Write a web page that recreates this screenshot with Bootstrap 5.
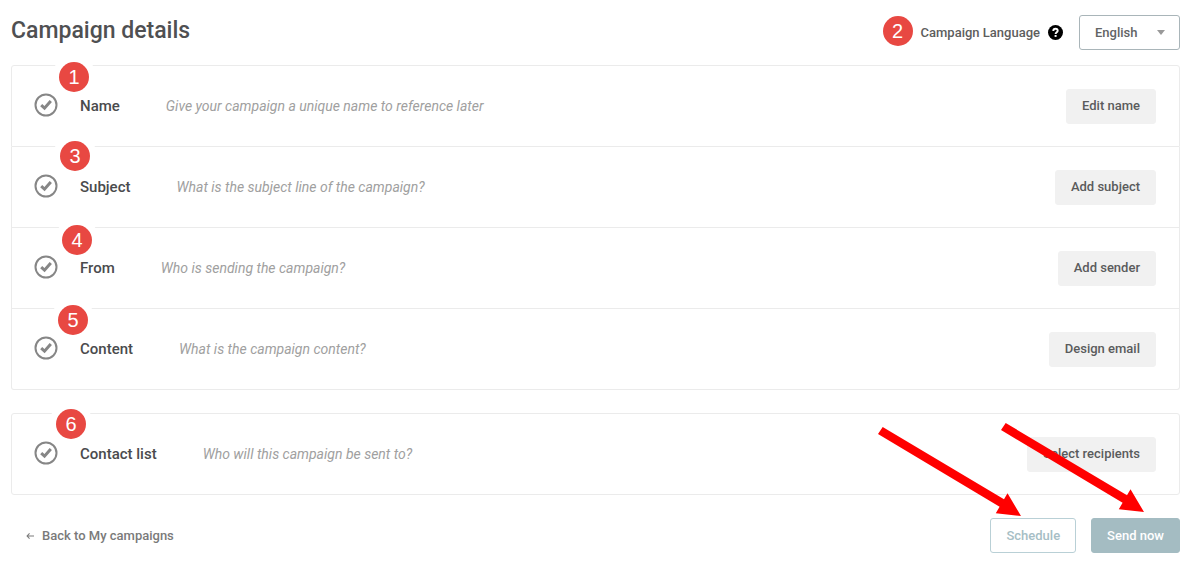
<!DOCTYPE html>
<html lang="en">
<head>
<meta charset="utf-8">
<meta name="viewport" content="width=device-width, initial-scale=1">
<title>Campaign details</title>
<link href="https://cdn.jsdelivr.net/npm/bootstrap@5.3.0/dist/css/bootstrap.min.css" rel="stylesheet">
<style>
  body { font-family: Roboto, "Liberation Sans", sans-serif; font-size: 14px; line-height: 20px; color: #4f5052; background: #fff; }
  .page { padding: 15px 11px 12px; }
  .page-title { font-size: 23px; line-height: 30px; font-weight: 500; color: #4f5052; }
  .lang-label { font-size: 13px; font-weight: 500; color: #5d5d5d; }
  .lang-select { width: 101px; height: 35px; padding: 0 36px 0 15px; font-size: 13px; font-weight: 500; color: #626465; border: 1px solid #a9b5b9; border-radius: 3px;
    background-image: url("data:image/svg+xml,%3Csvg xmlns='http://www.w3.org/2000/svg' viewBox='0 0 8 5'%3E%3Cpath fill='%23999' d='M0 0h8L4 5z'/%3E%3C/svg%3E");
    background-size: 8px 5px; background-position: right 14px center; }
  .panel { --bs-list-group-border-color: #ebebeb; --bs-list-group-border-radius: 3px; margin-bottom: 23px; }
  .page-head { margin-bottom: 15px; }
  .step { height: 81px; padding: 0 23px 0 22px; }
  .step:first-child { height: 82px; }
  .step-tick { margin-bottom: 3px; }
  .step-name { font-size: 15px; font-weight: 500; color: #4a4b4d; margin-left: 22px; z-index: 2; }
  .step-hint { font-style: italic; color: #a0a0a0; margin-left: 46px; }
  .act { --bs-btn-font-size: 13px; --bs-btn-font-weight: 500; --bs-btn-line-height: 20px; --bs-btn-padding-y: 6px; --bs-btn-padding-x: 15px; --bs-btn-border-radius: 3px; height: 35px; }
  .act-grey { --bs-btn-color: #5a5b5c; --bs-btn-bg: #f1f1f1; --bs-btn-border-color: #f1f1f1; --bs-btn-hover-bg: #e6e6e6; }
  .act-line { --bs-btn-color: #a6bec5; --bs-btn-bg: #fff; --bs-btn-border-color: #b9d0d6; --bs-btn-hover-color: #7fa0a9; }
  .act-fill { --bs-btn-color: #fff; --bs-btn-bg: #a4bcc2; --bs-btn-border-color: #a4bcc2; --bs-btn-hover-bg: #8fabb2; --bs-btn-hover-color: #fff; }
  .actions { gap: 15px; }
  .back { font-size: 13px; color: #7a7a7a; font-weight: 500; margin-left: 15px; }
  /* numbered callouts */
  .pin { width: 30px; height: 30px; border-radius: 50%; background: #e84842; color: #fff; font: 20px/30px "Liberation Sans", sans-serif; text-align: center; }
  .step .pin { position: absolute; z-index: 1; box-shadow: 0 0 0 7px #fff; }
  .pin-name { left: 47px; top: -4px; }
  .pin-subject { left: 48px; top: -6px; }
  .pin-from { left: 50px; top: -3px; }
  .pin-content { left: 46px; top: -4px; }
  .pin-list { left: 44px; top: -5px; }
  .pointer { position: absolute; z-index: 5; right: 55px; bottom: 37px; pointer-events: none; }
  .pointer-send { right: 36px; bottom: 41px; }
</style>
</head>
<body>
<svg class="d-none" aria-hidden="true">
  <symbol id="tick" viewBox="0 0 24 24">
    <circle cx="12" cy="12" r="10.5" fill="none" stroke="#868686" stroke-width="2"/>
    <path d="M7.2 12.2 10.5 15.2 16.8 7.9" fill="none" stroke="#868686" stroke-width="3"/>
  </symbol>
  <symbol id="arrow" viewBox="0 0 143 89">
    <path fill="#f00" d="M0 7 4.700 0 126 72.300 129.500 66.300 143 89 117.800 86.300 121.600 79.700z"/>
  </symbol>
</svg>
<main class="page container-fluid">
  <header class="page-head d-flex align-items-center">
    <h1 class="page-title mb-1">Campaign details</h1>
    <div class="ms-auto d-flex align-items-center">
      <span class="pin me-2 mb-1">2</span>
      <label class="lang-label" for="lang">Campaign Language</label>
      <svg class="ms-2 me-3" width="15" height="15" viewBox="0 0 15 15" role="img" aria-label="Help">
        <circle cx="7.500" cy="7.500" r="7.500"/>
        <path d="M5.300 5.900C5.300 4.500 6.200 3.700 7.500 3.700S9.700 4.500 9.700 5.700C9.700 7.200 7.600 7.200 7.600 9" fill="none" stroke="#fff" stroke-width="1.900"/>
        <path d="M6.600 10h2v1.900h-2z" fill="#fff"/>
      </svg>
      <select id="lang" class="form-select lang-select"><option>English</option></select>
    </div>
  </header>

  <ul class="panel list-group">
    <li class="step list-group-item d-flex align-items-center">
      <span class="pin pin-name">1</span>
      <svg class="step-tick" width="24" height="24"><use href="#tick"/></svg>
      <span class="step-name position-relative">Name</span><span class="step-hint">Give your campaign a unique name to reference later</span>
      <button type="button" class="btn act act-grey ms-auto">Edit name</button>
    </li>
    <li class="step list-group-item d-flex align-items-center">
      <span class="pin pin-subject">3</span>
      <svg class="step-tick" width="24" height="24"><use href="#tick"/></svg>
      <span class="step-name position-relative">Subject</span><span class="step-hint">What is the subject line of the campaign?</span>
      <button type="button" class="btn act act-grey ms-auto">Add subject</button>
    </li>
    <li class="step list-group-item d-flex align-items-center">
      <span class="pin pin-from">4</span>
      <svg class="step-tick" width="24" height="24"><use href="#tick"/></svg>
      <span class="step-name position-relative">From</span><span class="step-hint">Who is sending the campaign?</span>
      <button type="button" class="btn act act-grey ms-auto">Add sender</button>
    </li>
    <li class="step list-group-item d-flex align-items-center">
      <span class="pin pin-content">5</span>
      <svg class="step-tick" width="24" height="24"><use href="#tick"/></svg>
      <span class="step-name position-relative">Content</span><span class="step-hint">What is the campaign content?</span>
      <button type="button" class="btn act act-grey ms-auto">Design email</button>
    </li>
  </ul>

  <ul class="panel list-group">
    <li class="step list-group-item d-flex align-items-center">
      <span class="pin pin-list">6</span>
      <svg class="step-tick" width="24" height="24"><use href="#tick"/></svg>
      <span class="step-name position-relative">Contact list</span><span class="step-hint">Who will this campaign be sent to?</span>
      <button type="button" class="btn act act-grey ms-auto">Select recipients</button>
    </li>
  </ul>

  <footer class="d-flex align-items-center">
    <a class="back d-flex align-items-center text-decoration-none" href="#">
      <svg class="me-2" width="8" height="8" viewBox="0 0 9 8" fill="none" stroke="#7a7a7a" stroke-width="1.200"><path d="M9 4H1.500M4 1 1.200 4 4 7"/></svg>Back to My campaigns</a>
    <div class="actions ms-auto d-flex">
      <div class="position-relative">
        <button type="button" class="btn act act-line">Schedule</button>
        <svg class="pointer" width="143" height="89"><use href="#arrow"/></svg>
      </div>
      <div class="position-relative">
        <button type="button" class="btn act act-fill">Send now</button>
        <svg class="pointer pointer-send" width="143" height="89"><use href="#arrow"/></svg>
      </div>
    </div>
  </footer>
</main>
<script src="https://cdn.jsdelivr.net/npm/bootstrap@5.3.0/dist/js/bootstrap.bundle.min.js"></script>
</body>
</html>
